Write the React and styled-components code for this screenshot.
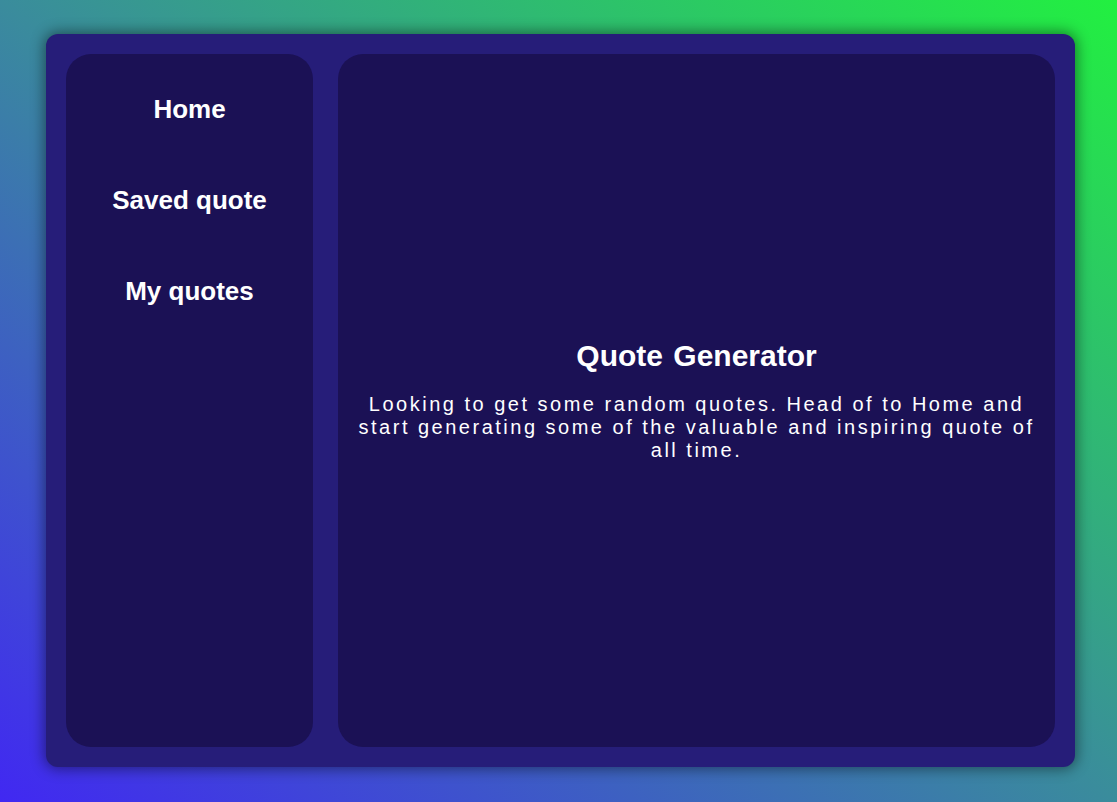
import React from "react";
import styled, { createGlobalStyle } from "styled-components";

const GlobalStyle = createGlobalStyle`
  html, body {
    margin: 0;
    padding: 0;
    height: 100%;
  }
  body {
    font-family: "Liberation Sans", Arial, sans-serif;
    background: linear-gradient(to top right, #4128f2 0%, #3a8c9c 50%, #22f040 100%);
    min-height: 802px;
  }
`;

const Page = styled.div`
  box-sizing: border-box;
  width: 100%;
  height: 802px;
  padding: 34px 42px 35px 46px;
  display: flex;
`;

const Container = styled.div`
  flex: 1;
  display: flex;
  gap: 25px;
  padding: 20px;
  background-color: #261d79;
  border-radius: 12px;
  box-shadow: 0px 0px 14px 2px rgba(0, 0, 0, 0.45);
`;

const Panel = styled.div`
  background-color: #1b1155;
  border-radius: 25px;
`;

const Sidebar = styled(Panel)`
  width: 247px;
  display: flex;
  flex-direction: column;
  align-items: center;
  padding-top: 40px;
  gap: 61px;
`;

const NavItem = styled.a`
  color: white;
  font-size: 26px;
  font-weight: 700;
  line-height: 30px;
  text-decoration: none;
  cursor: pointer;
`;

const Main = styled(Panel)`
  flex: 1;
  display: flex;
  flex-direction: column;
  justify-content: center;
  align-items: center;
  padding: 0 20px;
  text-align: center;
  color: white;
`;

const Heading = styled.h1`
  margin: 0 0 20px;
  font-size: 30px;
  font-weight: 700;
  line-height: 34px;
  word-spacing: 2px;
`;

const Text = styled.p`
  margin: 0;
  font-size: 20px;
  line-height: 23px;
  letter-spacing: 2.5px;
`;

function App() {
  return (
    <>
      <GlobalStyle />
      <Page>
        <Container>
          <Sidebar>
            <NavItem>Home</NavItem>
            <NavItem>Saved quote</NavItem>
            <NavItem>My quotes</NavItem>
          </Sidebar>
          <Main>
            <Heading>Quote Generator</Heading>
            <Text>
              Looking to get some random quotes. Head of to Home and start
              generating some of the valuable and inspiring quote of all time.
            </Text>
          </Main>
        </Container>
      </Page>
    </>
  );
}

export default App;
